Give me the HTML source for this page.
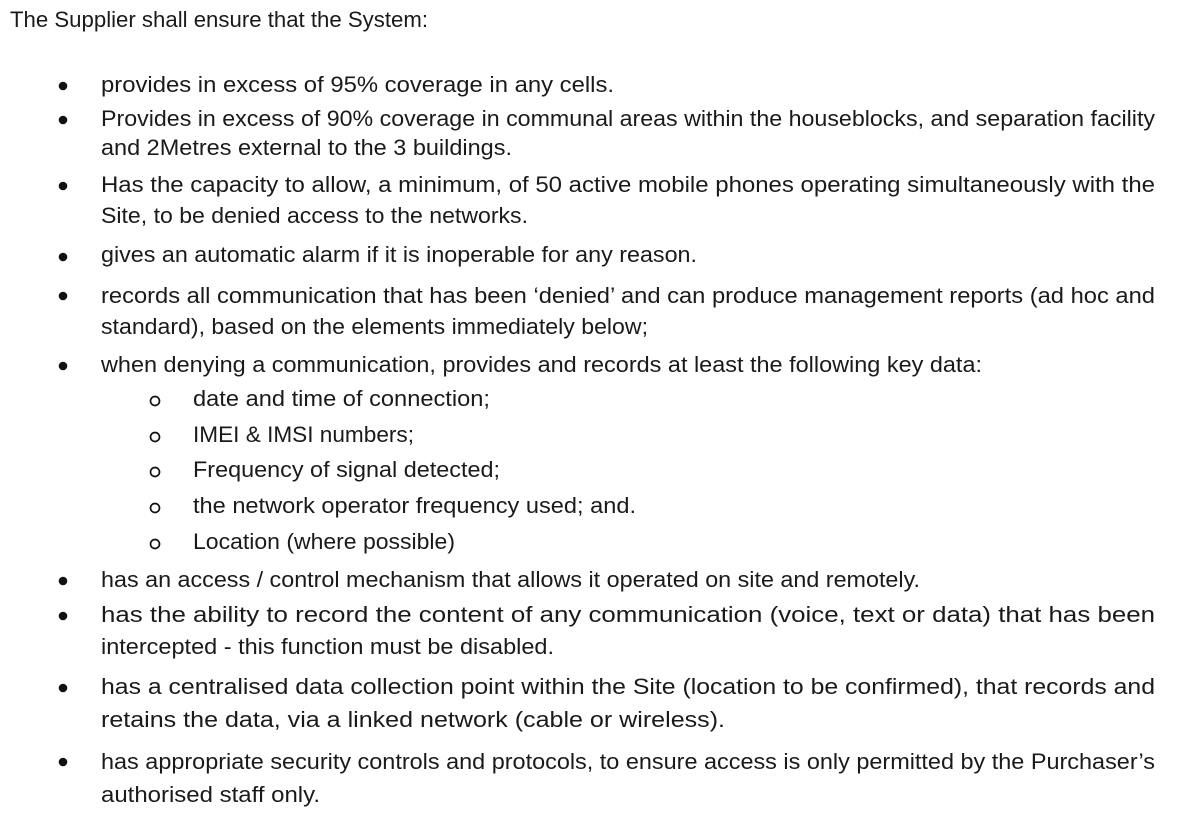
<!DOCTYPE html>
<html><head><meta charset="utf-8"><style>
html,body{margin:0;padding:0;background:#fff;}
svg{display:block;}
text{font-family:"Liberation Sans",sans-serif;font-size:22px;fill:#1a1a1a;}
</style></head><body>
<svg width="1198" height="820" viewBox="0 0 1198 820" xmlns="http://www.w3.org/2000/svg">
<rect width="1198" height="820" fill="#fff"/>
<text x="10" y="27" textLength="418" lengthAdjust="spacingAndGlyphs">The Supplier shall ensure that the System:</text>
<g fill="#111">
<circle cx="63" cy="86" r="4.3"/><circle cx="63" cy="120" r="4.3"/><circle cx="63" cy="186" r="4.3"/>
<circle cx="63" cy="257" r="4.3"/><circle cx="63" cy="296" r="4.3"/><circle cx="63" cy="366" r="4.3"/>
<circle cx="63" cy="581" r="4.3"/><circle cx="63" cy="616" r="4.3"/><circle cx="63" cy="688" r="4.3"/>
<circle cx="63" cy="762" r="4.3"/>
</g>
<g fill="none" stroke="#111" stroke-width="1.7">
<circle cx="155" cy="401" r="4.5"/><circle cx="155" cy="437" r="4.5"/><circle cx="155" cy="472" r="4.5"/>
<circle cx="155" cy="508" r="4.5"/><circle cx="155" cy="544" r="4.5"/>
</g>
<text x="101" y="92" textLength="513" lengthAdjust="spacingAndGlyphs">provides in excess of 95% coverage in any cells.</text>
<text x="101" y="126" textLength="1054" lengthAdjust="spacingAndGlyphs">Provides in excess of 90% coverage in communal areas within the houseblocks, and separation facility</text>
<text x="101" y="155" textLength="411" lengthAdjust="spacingAndGlyphs">and 2Metres external to the 3 buildings.</text>
<text x="101" y="192" textLength="1054" lengthAdjust="spacingAndGlyphs">Has the capacity to allow, a minimum, of 50 active mobile phones operating simultaneously with the</text>
<text x="101" y="223" textLength="427" lengthAdjust="spacingAndGlyphs">Site, to be denied access to the networks.</text>
<text x="101" y="262" textLength="596" lengthAdjust="spacingAndGlyphs">gives an automatic alarm if it is inoperable for any reason.</text>
<text x="101" y="303" textLength="1054" lengthAdjust="spacingAndGlyphs">records all communication that has been ‘denied’ and can produce management reports (ad hoc and</text>
<text x="101" y="334" textLength="547" lengthAdjust="spacingAndGlyphs">standard), based on the elements immediately below;</text>
<text x="101" y="372" textLength="881" lengthAdjust="spacingAndGlyphs">when denying a communication, provides and records at least the following key data:</text>
<text x="193" y="406" textLength="297" lengthAdjust="spacingAndGlyphs">date and time of connection;</text>
<text x="193" y="442" textLength="221" lengthAdjust="spacingAndGlyphs">IMEI &amp; IMSI numbers;</text>
<text x="193" y="477" textLength="307" lengthAdjust="spacingAndGlyphs">Frequency of signal detected;</text>
<text x="193" y="513" textLength="443" lengthAdjust="spacingAndGlyphs">the network operator frequency used; and.</text>
<text x="193" y="549" textLength="262" lengthAdjust="spacingAndGlyphs">Location (where possible)</text>
<text x="101" y="587" textLength="819" lengthAdjust="spacingAndGlyphs">has an access / control mechanism that allows it operated on site and remotely.</text>
<text x="101" y="622" textLength="1054" lengthAdjust="spacingAndGlyphs">has the ability to record the content of any communication (voice, text or data) that has been</text>
<text x="101" y="654" textLength="453" lengthAdjust="spacingAndGlyphs">intercepted - this function must be disabled.</text>
<text x="101" y="694" textLength="1054" lengthAdjust="spacingAndGlyphs">has a centralised data collection point within the Site (location to be confirmed), that records and</text>
<text x="101" y="727" textLength="624" lengthAdjust="spacingAndGlyphs">retains the data, via a linked network (cable or wireless).</text>
<text x="101" y="769" textLength="1054" lengthAdjust="spacingAndGlyphs">has appropriate security controls and protocols, to ensure access is only permitted by the Purchaser’s</text>
<text x="101" y="802" textLength="219" lengthAdjust="spacingAndGlyphs">authorised staff only.</text>
</svg>
</body></html>
